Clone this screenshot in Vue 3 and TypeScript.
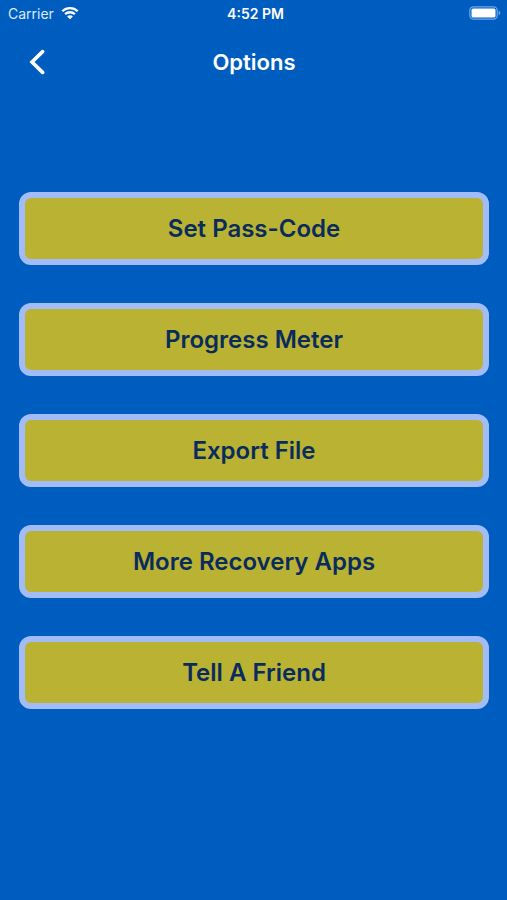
<script setup lang="ts">
const options: string[] = [
  'Set Pass-Code',
  'Progress Meter',
  'Export File',
  'More Recovery Apps',
  'Tell A Friend',
]
</script>

<template>
  <div class="screen">
    <div class="status">
      <div class="carrier">
        <span>Carrier</span>
        <svg class="wifi" width="18" height="14" viewBox="0 0 18 14" aria-hidden="true">
          <path d="M1.3 5.2C5.6 1 12.4 1 16.7 5.2" />
          <path d="M4.1 8.2C6.9 5.6 11.1 5.6 13.9 8.2" />
          <path class="dot" d="M9 13.2 6.1 10.4C7.7 8.9 10.3 8.9 11.9 10.4Z" />
        </svg>
      </div>
      <time class="clock">4:52 PM</time>
      <svg class="battery" width="32" height="14" viewBox="0 0 32 14" aria-hidden="true">
        <rect class="shell" x=".8" y=".8" width="27.4" height="12.4" rx="3.6" />
        <rect class="charge" x="2.5" y="2.5" width="24" height="9" rx="1.6" />
        <path class="cap" d="M29.7 4.8C31.8 5.5 31.8 8.5 29.7 9.2Z" />
      </svg>
    </div>
    <header class="nav">
      <button class="back" type="button" aria-label="Back">
        <svg width="16" height="26" viewBox="0 0 16 26" aria-hidden="true">
          <path d="M13.6 2.6 3 13 13.6 23.4" />
        </svg>
      </button>
      <h1>Options</h1>
    </header>
    <main class="options">
      <button v-for="option in options" :key="option" class="option" type="button">
        {{ option }}
      </button>
    </main>
  </div>
</template>

<style>
body {
  margin: 0;
  background: #005dc0;
}
</style>

<style scoped>
.screen {
  min-height: 100vh;
  box-sizing: border-box;
  background: #005dc0;
  color: #fff;
  font-family: Inter, sans-serif;
}
.status {
  display: grid;
  grid-template-columns: 1fr auto 1fr;
  align-items: center;
  height: 26px;
  padding: 0 6px 0 8px;
  font-size: 14px;
}
.carrier {
  display: flex;
  align-items: center;
  gap: 7px;
  color: #dcebfb;
}
.wifi path {
  fill: none;
  stroke: #fff;
  stroke-width: 2.3;
}
.wifi .dot {
  fill: #fff;
  stroke: none;
}
.clock {
  padding-left: 2px;
  font-weight: 600;
}
.battery {
  justify-self: end;
}
.shell {
  fill: none;
  stroke: #6fa8e6;
  stroke-width: 1.2;
}
.charge {
  fill: #fff;
}
.cap {
  fill: #6fa8e6;
}
.nav {
  display: grid;
  grid-template-columns: 1fr auto 1fr;
  align-items: center;
  height: 72px;
  padding: 0 20px 0 21px;
}
.back {
  display: flex;
  justify-self: start;
  padding: 8px;
  border: 0;
  background: none;
}
.back path {
  fill: none;
  stroke: #fff;
  stroke-width: 3.6;
  stroke-linecap: round;
}
h1 {
  margin: 0;
  font-size: 22px;
  font-weight: 600;
}
.options {
  display: flex;
  flex-direction: column;
  gap: 38px;
  padding: 94px 18px 0 19px;
}
.option {
  height: 73px;
  padding: 0;
  border: 6px solid #a1bcf6;
  border-radius: 12px;
  background: #bab232;
  color: #0a2c5c;
  font-family: inherit;
  font-size: 24px;
  font-weight: 600;
}
</style>
